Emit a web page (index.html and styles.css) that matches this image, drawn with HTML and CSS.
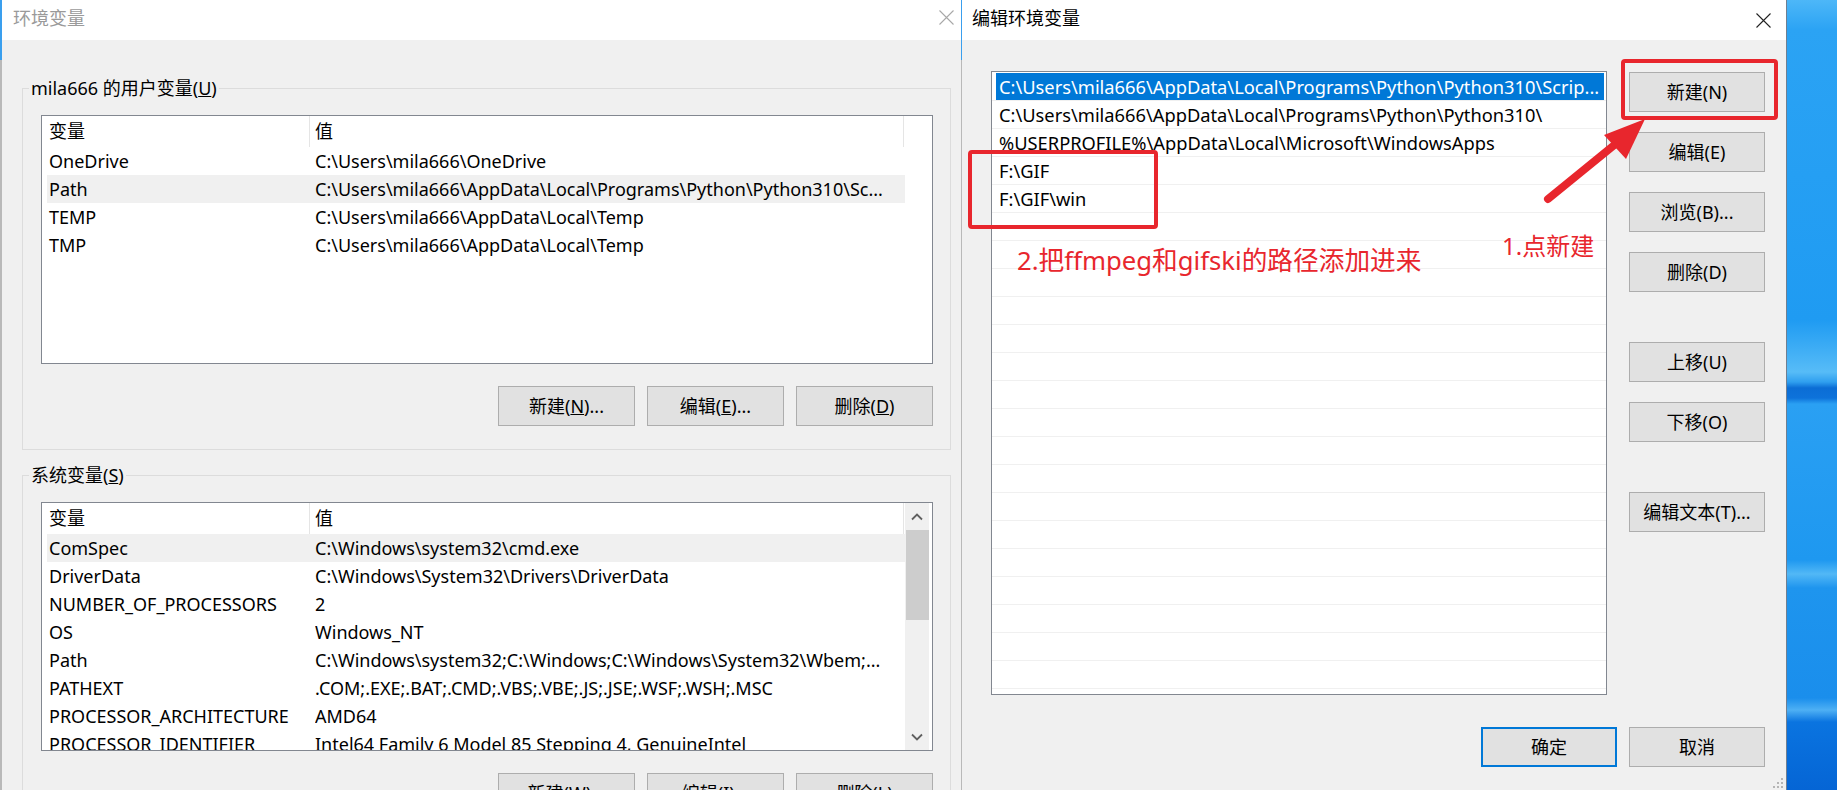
FILE: index.html
```html
<!DOCTYPE html>
<html lang="zh-CN">
<head>
<meta charset="utf-8">
<title>环境变量</title>
<link rel="stylesheet" href="styles.css">
</head>
<body>
<div class="screen">
  <section class="dlg dlg-env">
    <header class="titlebar">
      <span class="title">环境变量</span>
      <svg class="close" viewBox="0 0 15 15"><path d="M0.5 0.5 L14.5 14.5 M14.5 0.5 L0.5 14.5"/></svg>
    </header>
    <div class="env-body">
      <fieldset class="group group-user">
        <legend>mila666 的用户变量(<u>U</u>)</legend>
        <div class="listview">
          <div class="lv-main">
            <div class="lv-head"><span class="c1">变量</span><span class="c2">值</span></div>
            <div class="lv-row"><span class="c1">OneDrive</span><span class="c2">C:\Users\mila666\OneDrive</span></div>
            <div class="lv-row sel"><span class="c1">Path</span><span class="c2">C:\Users\mila666\AppData\Local\Programs\Python\Python310\Sc...</span></div>
            <div class="lv-row"><span class="c1">TEMP</span><span class="c2">C:\Users\mila666\AppData\Local\Temp</span></div>
            <div class="lv-row"><span class="c1">TMP</span><span class="c2">C:\Users\mila666\AppData\Local\Temp</span></div>
          </div>
        </div>
        <div class="btnrow">
          <button class="btn">新建(<u>N</u>)...</button>
          <button class="btn">编辑(<u>E</u>)...</button>
          <button class="btn">删除(<u>D</u>)</button>
        </div>
      </fieldset>
      <fieldset class="group group-sys">
        <legend>系统变量(<u>S</u>)</legend>
        <div class="listview">
          <div class="lv-main">
            <div class="lv-head"><span class="c1">变量</span><span class="c2">值</span></div>
            <div class="lv-row sel"><span class="c1">ComSpec</span><span class="c2">C:\Windows\system32\cmd.exe</span></div>
            <div class="lv-row"><span class="c1">DriverData</span><span class="c2">C:\Windows\System32\Drivers\DriverData</span></div>
            <div class="lv-row"><span class="c1">NUMBER_OF_PROCESSORS</span><span class="c2">2</span></div>
            <div class="lv-row"><span class="c1">OS</span><span class="c2">Windows_NT</span></div>
            <div class="lv-row"><span class="c1">Path</span><span class="c2">C:\Windows\system32;C:\Windows;C:\Windows\System32\Wbem;...</span></div>
            <div class="lv-row"><span class="c1">PATHEXT</span><span class="c2">.COM;.EXE;.BAT;.CMD;.VBS;.VBE;.JS;.JSE;.WSF;.WSH;.MSC</span></div>
            <div class="lv-row"><span class="c1">PROCESSOR_ARCHITECTURE</span><span class="c2">AMD64</span></div>
            <div class="lv-row"><span class="c1">PROCESSOR_IDENTIFIER</span><span class="c2">Intel64 Family 6 Model 85 Stepping 4, GenuineIntel</span></div>
          </div>
          <div class="scrollbar">
            <div class="sb-btn"><svg viewBox="0 0 12 8"><path d="M1 6.5 L6 1.5 L11 6.5"/></svg></div>
            <div class="sb-thumb"></div>
            <div class="sb-track"></div>
            <div class="sb-btn"><svg viewBox="0 0 12 8"><path d="M1 1.5 L6 6.5 L11 1.5"/></svg></div>
          </div>
        </div>
        <div class="btnrow">
          <button class="btn">新建(<u>W</u>)...</button>
          <button class="btn">编辑(<u>I</u>)...</button>
          <button class="btn">删除(<u>L</u>)</button>
        </div>
      </fieldset>
    </div>
  </section>

  <section class="dlg dlg-edit">
    <header class="titlebar">
      <span class="title">编辑环境变量</span>
      <svg class="close" viewBox="0 0 15 15"><path d="M0.5 0.5 L14.5 14.5 M14.5 0.5 L0.5 14.5"/></svg>
    </header>
    <div class="edit-body">
      <div class="edit-main">
        <div class="pathlist">
          <div class="pl-row"><span class="pl-text sel">C:\Users\mila666\AppData\Local\Programs\Python\Python310\Scrip...</span></div>
          <div class="pl-row"><span class="pl-text">C:\Users\mila666\AppData\Local\Programs\Python\Python310\</span></div>
          <div class="pl-row"><span class="pl-text">%USERPROFILE%\AppData\Local\Microsoft\WindowsApps</span></div>
          <div class="pl-row"><span class="pl-text">F:\GIF</span></div>
          <div class="pl-row"><span class="pl-text">F:\GIF\win</span></div>
          <div class="pl-row"></div><div class="pl-row"></div><div class="pl-row"></div>
          <div class="pl-row"></div><div class="pl-row"></div><div class="pl-row"></div>
          <div class="pl-row"></div><div class="pl-row"></div><div class="pl-row"></div>
          <div class="pl-row"></div><div class="pl-row"></div><div class="pl-row"></div>
          <div class="pl-row"></div><div class="pl-row"></div><div class="pl-row"></div>
          <div class="pl-row"></div><div class="pl-row"></div><div class="pl-row"></div>
        </div>
        <div class="side">
          <button class="btn">新建(N)</button>
          <button class="btn">编辑(E)</button>
          <button class="btn">浏览(B)...</button>
          <button class="btn">删除(D)</button>
          <button class="btn gap">上移(U)</button>
          <button class="btn">下移(O)</button>
          <button class="btn gap">编辑文本(T)...</button>
        </div>
      </div>
      <div class="edit-foot">
        <button class="btn default">确定</button>
        <button class="btn">取消</button>
      </div>
    </div>
    <svg class="grip" viewBox="0 0 12 12"><rect x="9" y="1" width="2" height="2"/><rect x="5" y="5" width="2" height="2"/><rect x="9" y="5" width="2" height="2"/><rect x="1" y="9" width="2" height="2"/><rect x="5" y="9" width="2" height="2"/><rect x="9" y="9" width="2" height="2"/></svg>
  </section>

  <div class="desktop"></div>

  <svg class="annot" viewBox="0 0 1837 790">
    <rect x="1623" y="61" width="153" height="57" rx="2"/>
    <rect x="970" y="152" width="186" height="75" rx="2"/>
    <line x1="1548" y1="199" x2="1618" y2="142"/>
    <polygon points="1645,119 1604,135 1626,159"/>
  </svg>
  <div class="note note1">1.点新建</div>
  <div class="note note2">2.把ffmpeg和gifski的路径添加进来</div>
</div>
</body>
</html>
```
FILE: styles.css
```css
* { box-sizing: border-box; }
html, body { margin: 0; padding: 0; }
body {
  width: 1837px; height: 790px; overflow: hidden;
  font-family: "Noto Sans", "Noto Sans CJK SC", sans-serif;
  font-size: 18px; color: #000; background: #1e95ee;
}
.screen { position: relative; display: flex; width: 1837px; height: 790px; overflow: hidden; }

.dlg { display: flex; flex-direction: column; height: 790px; background: #f0f0f0; flex: none; }
.dlg-env {
  width: 962px; border-left: 2px solid #b9b9b9; border-right: 1px solid #7a7a7a;
  border-image: linear-gradient(180deg, #3a9fee 0, #3a9fee 60px, #b9b9b9 60px) 1;
  border-image-slice: 0 1 0 1;
  border-image-width: 0 1px 0 2px;
}
.dlg-edit { width: 825px; position: relative; border-right: 1px solid #6f7f92; }

.titlebar { height: 40px; flex: none; background: #fff; display: flex; align-items: center; justify-content: space-between; }
.title { line-height: 24px; padding-bottom: 4px; }
.dlg-env .title { padding-left: 11px; color: #9a9a9a; }
.dlg-edit .title { padding-left: 10px; color: #000; }
.close { width: 15px; height: 15px; fill: none; stroke-width: 1.1; }
.dlg-env .close { margin: 0 7px 5px 0; stroke: #a8a8a8; }
.dlg-edit .close { margin: 0 15px 0 0; stroke: #222; }

/* group boxes */
.group { margin: 0; padding: 0; border: 1px solid #dcdcdc; width: 929px; min-width: 0; }
.group legend { margin-left: 6px; padding: 0 2px; line-height: 24px; }
.group-user { margin: 36px 0 0 20px; }
.group-sys { margin: 13px 0 0 20px; }

.listview { display: flex; height: 249px; margin: 15px 17px 0 18px; border: 1px solid #828790; background: #fff; overflow: hidden; }
.lv-main { flex: 1; min-width: 0; overflow: hidden; }
.lv-head { display: flex; height: 31px; line-height: 31px; white-space: nowrap; }
.lv-head .c1 { flex: none; width: 268px; padding-left: 7px; border-right: 1px solid #e5e5e5; }
.lv-head .c2 { flex: none; width: 594px; padding-left: 5px; border-right: 1px solid #e5e5e5; }
.lv-row { display: flex; width: 858px; height: 28px; line-height: 28px; margin-left: 5px; white-space: nowrap; }
.lv-row .c1 { flex: none; width: 268px; padding-left: 2px; overflow: hidden; }
.lv-row .c2 { flex: 1; min-width: 0; overflow: hidden; }
.lv-row.sel { background: #f0f0f0; }

.scrollbar { flex: none; width: 24px; margin-right: 3px; background: #f0f0f0; display: flex; flex-direction: column; }
.sb-btn { flex: none; height: 27px; display: flex; align-items: center; justify-content: center; }
.sb-btn svg { width: 12px; height: 8px; fill: none; stroke: #606060; stroke-width: 1.8; }
.sb-thumb { flex: none; height: 90px; margin-left: 1px; background: #cdcdcd; }
.sb-track { flex: 1; }

.btnrow { display: flex; justify-content: flex-end; gap: 12px; margin: 22px 17px 23px 18px; }
.btn {
  flex: none; width: 137px; height: 40px; padding: 0;
  background: #e1e1e1; border: 1px solid #adadad;
  font-family: inherit; font-size: 18px; color: #000; line-height: 38px;
}

/* edit dialog */
.edit-body { flex: 1; display: flex; flex-direction: column; padding: 31px 21px 0 29px; }
.edit-main { display: flex; gap: 22px; }
.pathlist { flex: none; width: 616px; height: 624px; padding-top: 1px; border: 1px solid #828790; background: #fff; overflow: hidden; font-size: 18.3px; }
.pl-row { height: 28px; border-bottom: 1px solid #f0f0f0; }
.pl-text { display: block; height: 27px; line-height: 27px; margin: 0 2px 0 4px; padding-left: 3px; white-space: nowrap; overflow: hidden; }
.pl-text.sel { background: #0078d7; color: #fff; }

.side { display: flex; flex-direction: column; padding-top: 1px; }
.side .btn { width: 136px; margin-top: 20px; }
.side .btn:first-child { margin-top: 0; }
.side .btn.gap { margin-top: 50px; }

.edit-foot { display: flex; justify-content: flex-end; gap: 12px; margin-top: 32px; }
.edit-foot .btn { width: 136px; }
.btn.default { border: 2px solid #0078d7; line-height: 36px; }

.grip { position: absolute; right: 2px; bottom: 1px; width: 12px; height: 12px; fill: #b5b5b5; }

.desktop {
  flex: 1;
  background: linear-gradient(180deg,
    #4db7f8 0px, #2ba3f4 30px, #1f9bf2 320px, #57bcf7 372px, #2f9fef 382px,
    #0b6dd5 388px, #0d72da 398px, #2aa0f3 404px, #1e98f0 560px,
    #52b8f6 574px, #1e95ee 588px, #1a8eec 698px, #4eb0f4 710px,
    #0a74e0 722px, #0565d5 790px);
}

/* annotations */
.annot { position: absolute; left: 0; top: 0; width: 1837px; height: 790px; pointer-events: none; }
.annot rect { fill: none; stroke: #e8262d; stroke-width: 4; }
.annot line { stroke: #e8262d; stroke-width: 8; stroke-linecap: round; }
.annot polygon { fill: #e8262d; }
.note { position: absolute; color: #e8262d; white-space: nowrap; }
.note1 { left: 1502px; top: 234px; font-size: 24px; line-height: 24px; }
.note2 { left: 1017px; top: 248px; font-size: 25.7px; line-height: 26px; }
```
